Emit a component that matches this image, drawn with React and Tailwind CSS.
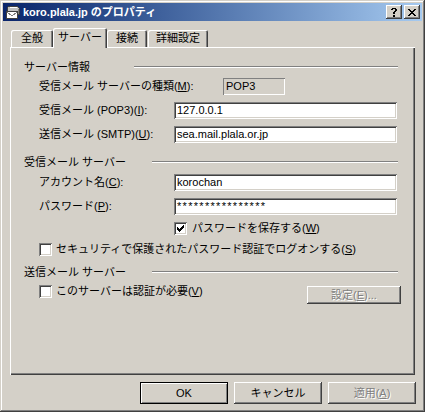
import React from "react";

const U = ({ children }) => <span className="underline underline-offset-[1px]">{children}</span>;

const sunken =
  "shadow-[inset_1px_1px_#808080,inset_-1px_-1px_#ffffff,inset_2px_2px_#404040,inset_-2px_-2px_#d4d0c8]";
const raised =
  "shadow-[inset_-1px_-1px_#404040,inset_1px_1px_#ffffff,inset_-2px_-2px_#808080,inset_2px_2px_#d4d0c8]";
const disabledText = "text-[#808080] [text-shadow:1px_1px_0_#ffffff]";

function Pixels({ rows, color = "#000", w, h }) {
  const rects = [];
  rows.forEach((r, y) => {
    for (let x = 0; x < r.length; x++) {
      if (r[x] === "#") rects.push(<rect key={`${x}-${y}`} x={x} y={y} width="1" height="1" fill={color} />);
    }
  });
  return (
    <svg width={w} height={h} viewBox={`0 0 ${w} ${h}`} shapeRendering="crispEdges">
      {rects}
    </svg>
  );
}

function TitleIcon() {
  return (
    <svg width="16" height="16" viewBox="0 0 16 16" shapeRendering="crispEdges">
      <path d="M4 2h8l2 2v6H2V4z" fill="#c0c0c0" stroke="#404040" strokeWidth="1" />
      <path d="M5 3h6l1 1H4z" fill="#ffffff" />
      <rect x="1.5" y="7.5" width="11" height="7" fill="#ffffff" stroke="#404040" />
      <path d="M2 8l5 4l5-4" fill="none" stroke="#808080" />
      <path d="M13 5h1v5h-1z" fill="#808080" />
    </svg>
  );
}

function TitleBtn({ children }) {
  return (
    <div className={`w-[16px] h-[14px] bg-[#d4d0c8] ${raised} flex items-center justify-center`}>{children}</div>
  );
}

function Tab({ children, active, className }) {
  if (active) {
    return (
      <div
        className={`relative z-10 -mb-px h-[20px] bg-[#d4d0c8] rounded-t-[2px] flex items-center justify-center pb-[2px] shadow-[inset_1px_1px_#ffffff,inset_-1px_0_#404040,inset_-2px_0_#808080] ${className}`}
      >
        <span className="leading-none">{children}</span>
      </div>
    );
  }
  return (
    <div
      className={`h-[17px] bg-[#d4d0c8] rounded-t-[2px] flex items-center justify-center shadow-[inset_1px_1px_#ffffff,inset_-1px_0_#404040,inset_-2px_0_#808080] ${className}`}
    >
      <span className="leading-none">{children}</span>
    </div>
  );
}

function Header({ label, lineClass, className }) {
  return (
    <div className={`h-[14px] flex items-center pl-[14px] pr-[17px] ${className}`}>
      <span className="leading-none">{label}</span>
      <div className={`ml-auto h-[2px] bg-white border-t border-[#808080] ${lineClass}`} />
    </div>
  );
}

function Field({ value, className = "" }) {
  return (
    <div className={`w-[223px] h-[17px] bg-white ${sunken} flex items-center pl-[3px] leading-none ${className}`}>
      {value}
    </div>
  );
}

function Check({ checked }) {
  return (
    <span className={`w-[13px] h-[13px] shrink-0 bg-white ${sunken} flex items-center justify-center`}>
      {checked && (
        <Pixels
          w={7}
          h={7}
          rows={["......#", ".....##", "#...###", "##.###.", "#####..", ".###...", "..#...."]}
        />
      )}
    </span>
  );
}

function Button({ children, def, disabled, className = "" }) {
  return (
    <div
      className={`h-[22px] w-[88px] flex items-center justify-center leading-none ${
        def
          ? "border border-black shadow-[inset_1px_1px_#ffffff,inset_-1px_-1px_#808080]"
          : raised
      } ${disabled ? disabledText : ""} ${className}`}
    >
      {children}
    </div>
  );
}

export default function App() {
  return (
    <div className="w-[425px] h-[412px] bg-[#d4d0c8] font-['Liberation_Sans','Noto_Sans_CJK_JP',sans-serif] text-[11px] text-black p-[3px] flex flex-col shadow-[inset_-1px_-1px_#404040,inset_1px_1px_#d4d0c8,inset_-2px_-2px_#808080,inset_2px_2px_#ffffff]">
      {/* Title bar */}
      <div className="h-[18px] shrink-0 flex items-center px-[2px] bg-gradient-to-r from-[#0a246a] to-[#a6caf0]">
        <TitleIcon />
        <span className="ml-[2px] text-white font-bold leading-none">koro.plala.jp のプロパティ</span>
        <div className="ml-auto flex gap-[2px]">
          <TitleBtn>
            <Pixels
              w={6}
              h={9}
              rows={[".####.", "##..##", "....##", "...##.", "..##..", "..##..", "......", "..##..", "..##.."]}
            />
          </TitleBtn>
          <TitleBtn>
            <Pixels
              w={8}
              h={7}
              rows={["##....##", ".##..##.", "..####..", "...##...", "..####..", ".##..##.", "##....##"]}
            />
          </TitleBtn>
        </div>
      </div>

      {/* Tabs */}
      <div className="mt-[7px] h-[19px] flex items-end pl-[8px]">
        <Tab className="w-[42px]">全般</Tab>
        <Tab active className="w-[54px]">サーバー</Tab>
        <Tab className="w-[40px]">接続</Tab>
        <Tab className="w-[60px] ml-[1px]">詳細設定</Tab>
      </div>

      {/* Panel */}
      <div className="mx-[7px] h-[328px] shrink-0 flex flex-col pt-[1px] shadow-[inset_1px_1px_#ffffff,inset_-1px_-1px_#404040,inset_-2px_-2px_#808080]">
        <Header label="サーバー情報" lineClass="w-[264px]" className="mt-[12px]" />

        <div className="mt-[4px] h-[17px] flex items-center pl-[29px]">
          <span className="w-[184px] shrink-0 leading-none">
            受信メール サーバーの種類(<U>M</U>):
          </span>
          <div className="w-[62px] h-[17px] flex items-center pl-[3px] leading-none shadow-[inset_1px_1px_#808080,inset_-1px_-1px_#ffffff]">
            POP3
          </div>
        </div>

        <div className="mt-[7px] h-[17px] flex items-center pl-[29px]">
          <span className="w-[135px] shrink-0 leading-none">
            受信メール (POP3)(<U>I</U>):
          </span>
          <Field value="127.0.0.1" />
        </div>

        <div className="mt-[7px] h-[17px] flex items-center pl-[29px]">
          <span className="w-[135px] shrink-0 leading-none">
            送信メール (SMTP)(<U>U</U>):
          </span>
          <Field value="sea.mail.plala.or.jp" />
        </div>

        <Header label="受信メール サーバー" lineClass="w-[246px]" className="mt-[12px]" />

        <div className="mt-[5px] h-[17px] flex items-center pl-[29px]">
          <span className="w-[135px] shrink-0 leading-none">
            アカウント名(<U>C</U>):
          </span>
          <Field value="korochan" />
        </div>

        <div className="mt-[7px] h-[17px] flex items-center pl-[29px]">
          <span className="w-[135px] shrink-0 leading-none">
            パスワード(<U>P</U>):
          </span>
          <Field value="****************" className="tracking-[1.3px]" />
        </div>

        <div className="mt-[7px] h-[13px] flex items-center pl-[164px]">
          <Check checked />
          <span className="ml-[5px] leading-none">
            パスワードを保存する(<U>W</U>)
          </span>
        </div>

        <div className="mt-[8px] h-[13px] flex items-center pl-[29px]">
          <Check />
          <span className="ml-[4px] leading-none">
            セキュリティで保護されたパスワード認証でログオンする(<U>S</U>)
          </span>
        </div>

        <Header label="送信メール サーバー" lineClass="w-[246px]" className="mt-[9px]" />

        <div className="mt-[6px] h-[19px] flex items-start pl-[29px] pr-[14px]">
          <div className="h-[13px] flex items-center">
            <Check />
            <span className="ml-[4px] leading-none">
              このサーバーは認証が必要(<U>V</U>)
            </span>
          </div>
          <div
            className={`ml-auto mt-[1px] w-[94px] h-[18px] flex items-center justify-center leading-none ${raised} ${disabledText}`}
          >
            設定(<U>E</U>)...
          </div>
        </div>
      </div>

      {/* Buttons */}
      <div className="mt-[7px] flex justify-end gap-[6px] pr-[6px]">
        <Button def>OK</Button>
        <Button>キャンセル</Button>
        <Button disabled>
          適用(<U>A</U>)
        </Button>
      </div>
    </div>
  );
}
